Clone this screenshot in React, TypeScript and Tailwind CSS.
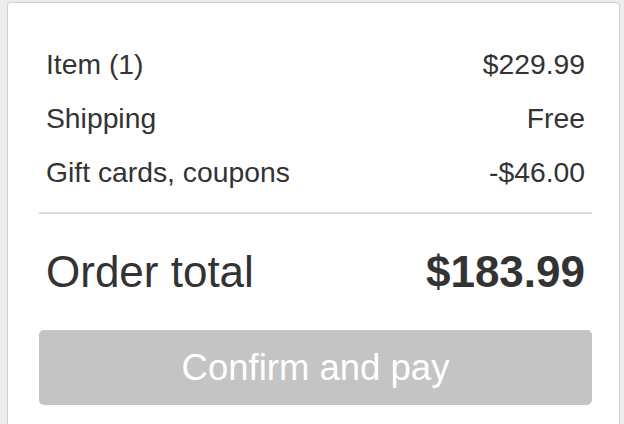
import React from "react";

const rows = [
  { label: "Item (1)", value: "$229.99" },
  { label: "Shipping", value: "Free" },
  { label: "Gift cards, coupons", value: "-$46.00" },
];

export default function App() {
  return (
    <div
      className="min-h-[424px] w-[624px] overflow-hidden bg-[#eeedeb] pt-[2px]"
      style={{ fontFamily: '"Liberation Sans", Arial, Helvetica, sans-serif' }}
    >
      <div className="ml-[7px] h-[440px] w-[613px] rounded-t-[4px] border border-[#cfcfcf] bg-white pl-[31px] pt-[34px] text-[#333333]">
        <div className="w-[553px]">
          {rows.map((r) => (
            <div
              key={r.label}
              className="flex h-[54px] items-start justify-between px-[7px] text-[28.3px] leading-[54px]"
            >
              <span>{r.label}</span>
              <span>{r.value}</span>
            </div>
          ))}
          <div className="mt-[13px] h-[2px] bg-[#dddddd]" />
          <div className="mt-[33px] flex h-[50px] items-start justify-between px-[7px] text-[44px] leading-[50px]">
            <span>Order total</span>
            <span className="font-bold">$183.99</span>
          </div>
          <button
            type="button"
            className="mt-[33px] flex h-[75px] w-full items-center justify-center rounded-[5px] bg-[#c4c4c4] text-[36.5px] leading-[40px] text-white"
          >
            Confirm and pay
          </button>
        </div>
      </div>
    </div>
  );
}
